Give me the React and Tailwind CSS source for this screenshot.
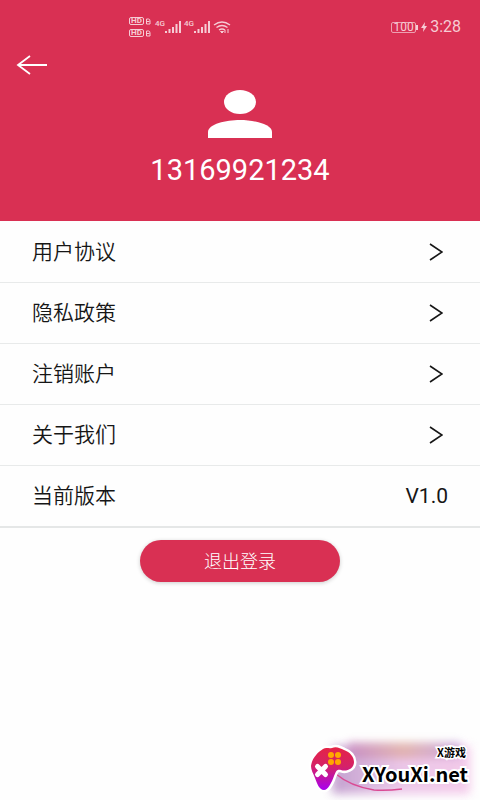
const links = ["用户协议", "隐私政策", "注销账户", "关于我们"];

function HdBadge() {
  return (
    <span className="flex items-center gap-px">
      <span className="flex h-2 w-[15px] items-center justify-center rounded-xs border border-[#f6ccd5] text-[8px] leading-none font-bold">
        HD
      </span>
      <svg viewBox="0 0 6 7" className="h-[7px] w-[6px]" fill="none" stroke="currentColor" aria-hidden="true">
        <path d="M1.5 1h2q1.5 0 1.5 2v3h-3.5zM1.5 3.5h3" />
      </svg>
    </span>
  );
}

function Signal() {
  return (
    <span className="flex">
      <span className="text-[8px] leading-none font-medium">4G</span>
      <svg viewBox="0 0 17 14" className="h-[14px] w-[17px]" fill="currentColor" aria-hidden="true">
        <path d="M0 11h2v2H0zM3.500 9h2v4h-2zM7 7h2v6H7zM10.500 4h2v9h-2zM14 1h2v12h-2z" />
      </svg>
    </span>
  );
}

function StatusBar() {
  return (
    <div className="flex h-[54px] items-center justify-between pr-[19px] pl-[129px] text-[#f6ccd5]">
      <div className="flex items-center gap-1">
        <div className="flex flex-col gap-1">
          <HdBadge />
          <HdBadge />
        </div>
        <div className="flex items-center gap-0.5">
          <Signal />
          <Signal />
          <svg viewBox="0 0 18 14" className="h-[14px] w-[18px]" fill="none" stroke="currentColor" strokeWidth="1.4" aria-hidden="true">
            <path d="M1 5q8-6 16 0M3.500 7.500q5.500-4 11 0M6 10q3-2 6 0" />
            <path d="M7.500 11.500h3L9 13zM12 10v3M15 9v4" fill="currentColor" strokeWidth="1" />
          </svg>
        </div>
      </div>
      <div className="flex items-center gap-[3px]">
        <span className="flex items-center">
          <span className="flex h-[11px] w-[25px] items-center justify-center rounded-xs border border-[#eda0b1] text-[12px] leading-none">
            100
          </span>
          <span className="h-[5px] w-[2px] bg-[#f6ccd5]" />
        </span>
        <svg viewBox="0 0 6 10" className="h-[10px] w-[6px]" fill="currentColor" aria-hidden="true">
          <path d="M4 0L0 6h2.500L2 10l4-6H3.500z" />
        </svg>
        <span className="text-[16px] leading-none">3:28</span>
      </div>
    </div>
  );
}

function Watermark() {
  return (
    <div className="absolute right-0 bottom-0 h-[70px] w-[180px] overflow-hidden">
      <div className="absolute top-4 left-8 h-12 w-[138px] bg-linear-to-r from-[#b58bc4] via-[#e7b9e3] to-[#f2bfe6] opacity-80 blur-[5px]" />
      <div className="absolute top-3 left-12 h-4 w-28 bg-linear-to-r from-[#c06db0] via-[#d69a76] to-[#a77bd0] opacity-50 blur-[4px]" />
      <svg viewBox="0 0 180 70" className="absolute inset-0 h-full w-full" aria-hidden="true">
        <defs>
          <linearGradient id="pad" x1="0" y1="0" x2="0" y2="1">
            <stop offset="0" stopColor="#e52345" />
            <stop offset=".45" stopColor="#d52268" />
            <stop offset="1" stopColor="#a800f0" />
          </linearGradient>
        </defs>
        <path d="M36 44Q50 56 74 60Q86 61 102 59" fill="none" stroke="#da4b94" strokeWidth="1.500" />
        <path
          d="M23 19C26 17 29 19 32 18C36 16 40 18 44 20C50 22 54 27 54 32C54 39 46 42 41 40C36 39 36 42 34 46C32 52 28 60 24 60C19 60 17 53 15 48C13 43 11 40 11 36C12 28 18 22 23 19Z"
          fill="url(#pad)"
          stroke="#fff"
          strokeWidth="5"
          strokeLinejoin="round"
          paintOrder="stroke"
        />
        <path d="M17.500 36.500l8 8M25.500 36.500l-8 8" stroke="#fff" strokeWidth="5" strokeLinecap="round" />
        <g fill="#ffa800">
          <circle cx="31" cy="25" r="3" />
          <circle cx="38" cy="25" r="3" />
          <circle cx="31" cy="32" r="3" />
          <circle cx="38" cy="32" r="3" />
        </g>
      </svg>
      <div className="absolute top-4 right-3 flex flex-col items-end font-['Noto_Sans_CJK_SC',sans-serif] font-bold text-black">
        <span className="mr-0.5 text-[11px] leading-3 [-webkit-text-stroke:3px_white] [paint-order:stroke_fill]">X游戏</span>
        <span className="text-[20px] leading-8 [-webkit-text-stroke:4px_white] [paint-order:stroke_fill]">XYouXi.net</span>
      </div>
    </div>
  );
}

export default function App() {
  return (
    <div className="relative min-h-screen bg-[#fefefe] font-[Roboto,'Noto_Sans_CJK_SC',sans-serif] text-[#161616]">
      <header className="bg-[#d93053] pb-[35px] text-white">
        <StatusBar />
        <button type="button" aria-label="返回" className="ml-4 block h-[22px] w-8">
          <svg viewBox="0 0 32 22" className="h-full w-full" fill="none" stroke="currentColor" strokeWidth="1.8">
            <path d="M14 2L2 11l12 9M2 11h29" />
          </svg>
        </button>
        <div className="mt-3.5 flex flex-col items-center">
          <svg viewBox="0 0 64 48" className="h-12 w-16" fill="currentColor" aria-hidden="true">
            <ellipse cx="32" cy="12" rx="16" ry="12" />
            <path d="M0 48v-6C0 34 18 30 32 30s32 4 32 12v6z" />
          </svg>
          <p className="mt-4 text-[29px] leading-8">13169921234</p>
        </div>
      </header>

      <main className="pt-px">
        <nav>
          {links.map((label) => (
            <a key={label} href="#" className="flex h-[61px] items-center justify-between border-b border-[#e8eaea] pr-[37px] pl-8 text-[21px] font-[350]">
              <span className="pt-0.5">{label}</span>
              <svg viewBox="0 0 14 18" className="h-[18px] w-[14px]" fill="none" stroke="currentColor" strokeWidth="1.6" aria-hidden="true">
                <path d="M1 1l12 8-12 8" />
              </svg>
            </a>
          ))}
        </nav>
        <div className="flex h-[62px] items-center justify-between border-b-2 border-[#e5e7e7] px-8 text-[21px]">
          <span className="pt-0.5 font-[350]">当前版本</span>
          <span className="pt-0.5">V1.0</span>
        </div>
        <button type="button" className="mx-auto mt-3 block h-[42px] w-[200px] rounded-full bg-[#d93053] text-[18px] font-light text-white shadow-[0_1px_4px_#00000033]">
          退出登录
        </button>
      </main>

      <Watermark />
    </div>
  );
}
